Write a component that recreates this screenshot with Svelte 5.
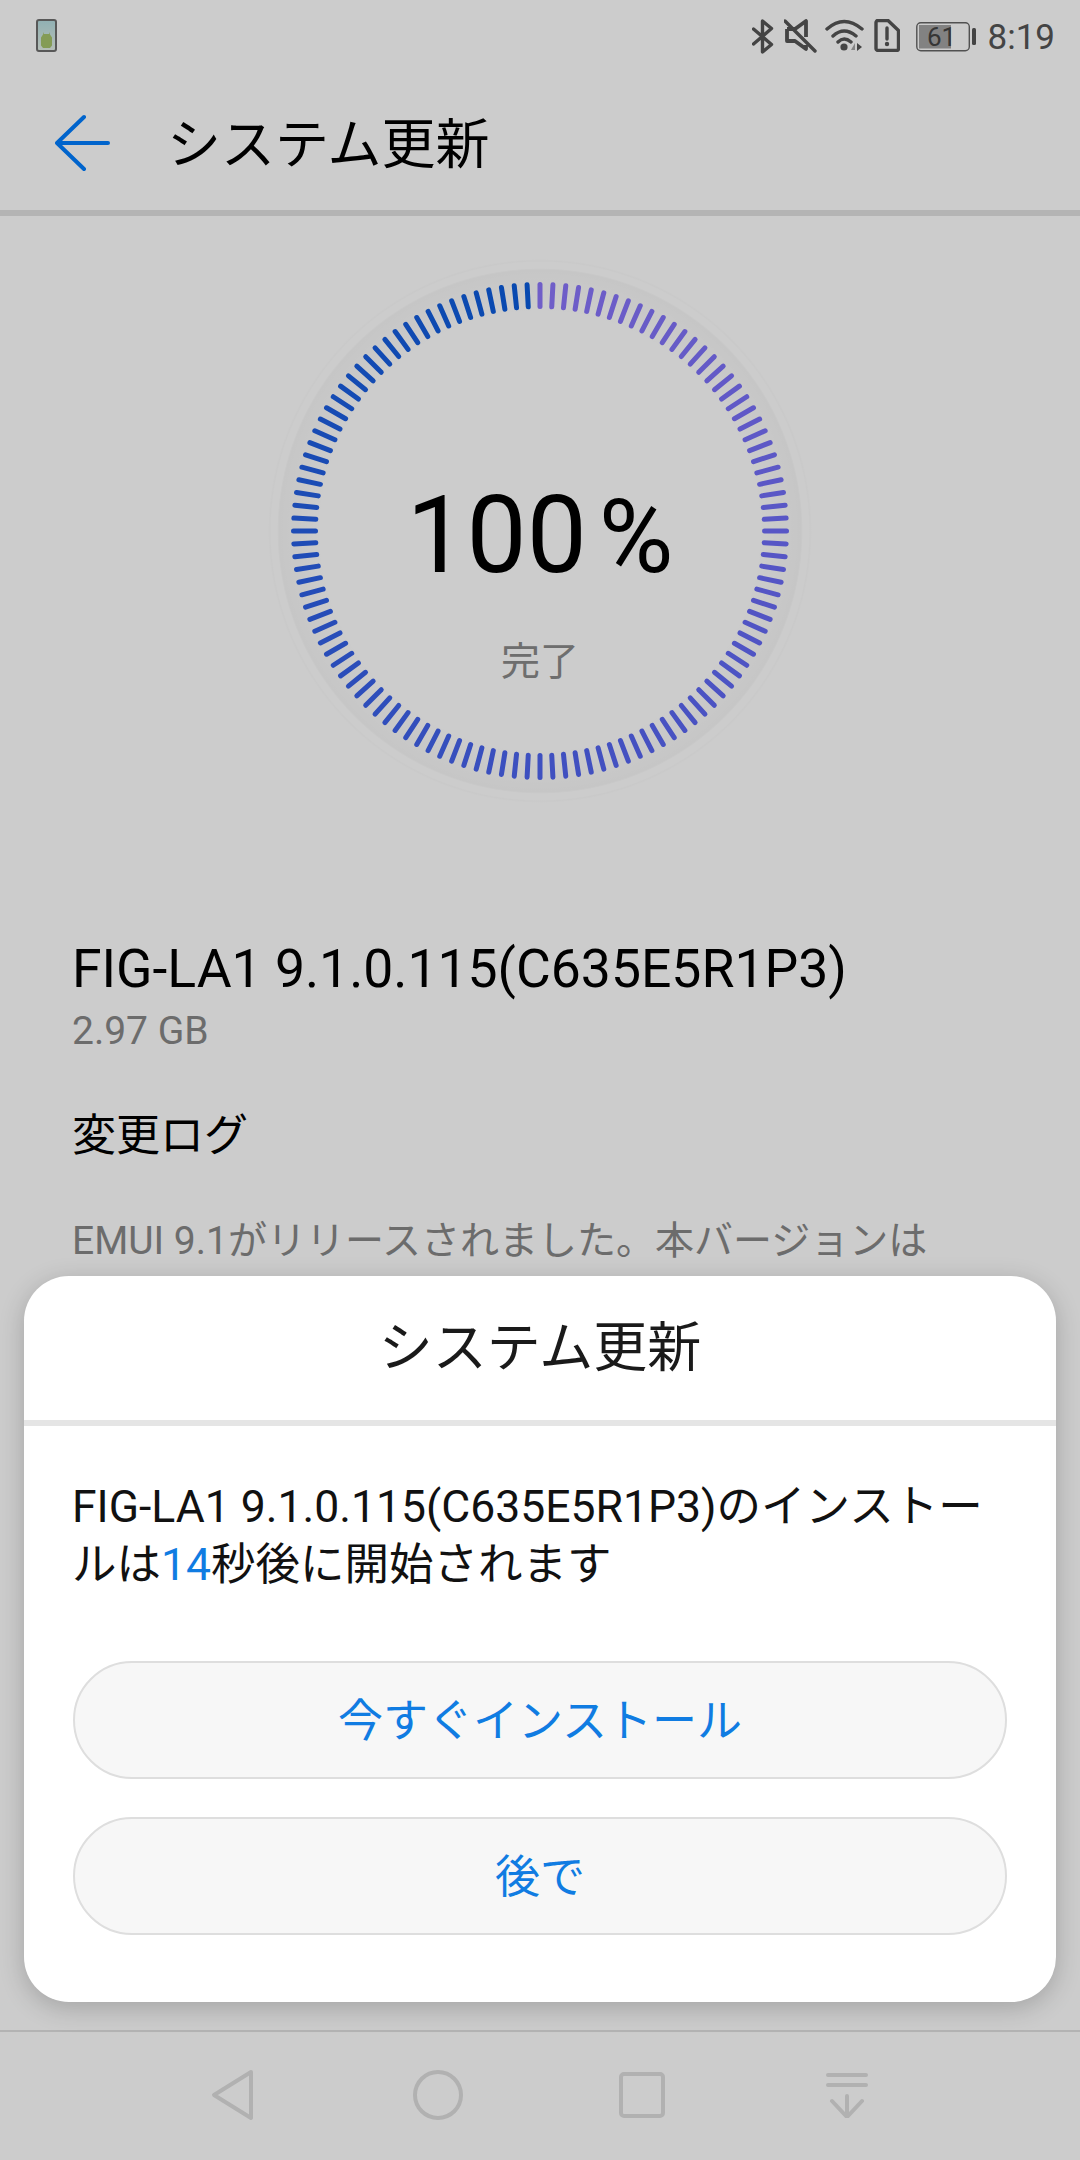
<script>
    // colour stops of the sweep, from 12 o'clock clockwise (before the scrim dims them)
    const stops = [
        [0, [140, 118, 250]],
        [0.25, [110, 108, 248]],
        [0.5, [78, 100, 240]],
        [0.75, [38, 95, 228]],
        [0.99, [10, 92, 220]],
    ]

    function sweepColor(t) {
        let i = 0
        while (i < stops.length - 2 && t > stops[i + 1][0]) i++
        const [t0, c0] = stops[i]
        const [t1, c1] = stops[i + 1]
        const k = Math.min(1, (t - t0) / (t1 - t0))
        const c = c0.map((v, n) => Math.round(v + (c1[n] - v) * k))
        return `rgb(${c[0]},${c[1]},${c[2]})`
    }

    const ticks = Array.from({length: 120}, (_, i) => ({
        angle: i * 3,
        color: sweepColor(i / 120),
    }))
</script>

<div class="screen">
    <div class="status-bar">
        <svg class="notif" width="21" height="33" viewBox="0 0 21 33">
            <defs>
                <linearGradient id="thumb" x1="0" y1="0" x2="0" y2="1">
                    <stop offset="0" stop-color="#b5dde0" />
                    <stop offset="1" stop-color="#e4efe6" />
                </linearGradient>
            </defs>
            <rect x="1" y="1" width="19" height="31" rx="2" fill="url(#thumb)" stroke="#6e6e6e" stroke-width="2" />
            <path d="M8 13v2h5v-2l1 2.500 2 3v8l-2 2.500H7l-2-2.500v-8l2-3z" fill="#a6c46c" />
        </svg>
        <div class="status-right">
            <svg width="22" height="35" viewBox="0 0 22 35" class="ic bt">
                <path d="M1.500 10 L19.500 25.500 L10.500 33 V2 L19.500 9.500 L1.500 25" fill="none" stroke="#555" stroke-width="3.400" stroke-linejoin="round" stroke-linecap="round" />
            </svg>
            <svg width="33" height="34" viewBox="0 0 33 34" class="ic mute">
                <path d="M3 10h8l11-8v16M3 10v12h8l11 8v-4" fill="none" stroke="#555" stroke-width="3.800" stroke-linejoin="round" />
                <path d="M1 2 L31 32" stroke="#555" stroke-width="3.400" stroke-linecap="round" />
            </svg>
            <svg width="40" height="34" viewBox="0 0 40 34" class="ic wifi">
                <path d="M2 10 Q19 -5 37 10 M8 17 Q19 7 31 17 M13 23 Q19 17 26 23" fill="none" stroke="#555" stroke-width="3.400" stroke-linecap="round" />
                <circle cx="19" cy="28" r="3.600" fill="#555" />
                <path d="M26 31 l4-7 v7z" fill="#a5a5a5" />
                <path d="M32 24 l5 4 -5 4z" fill="#555" />
            </svg>
            <svg width="26" height="33" viewBox="0 0 26 33" class="ic sim">
                <path d="M4 1.500h10l10.500 10v18a2 2 0 0 1-2 2H4a2 2 0 0 1-2-2V3.500a2 2 0 0 1 2-2z" fill="none" stroke="#555" stroke-width="3.400" stroke-linejoin="round" />
                <path d="M13 9v11" stroke="#555" stroke-width="3.400" stroke-linecap="round" />
                <circle cx="13" cy="25" r="2.200" fill="#555" />
            </svg>
            <svg width="60" height="30" viewBox="0 0 60 30" class="ic battery">
                <rect x="0.800" y="0.800" width="52.500" height="28" rx="4" fill="none" stroke="#666" stroke-width="1.400" />
                <rect x="3" y="3" width="32" height="23.500" fill="#a3a3a3" />
                <text x="25.500" y="24" text-anchor="middle">61</text>
                <rect x="56" y="6" width="4" height="17" rx="1.500" fill="#555" />
            </svg>
            <span class="clock">8:19</span>
        </div>
    </div>

    <header class="app-bar">
        <svg width="58" height="58" viewBox="0 0 58 58" class="back">
            <path d="M29 3 L2 29 L29 55 M2 29 H53" fill="none" stroke="#007dff" stroke-width="4" stroke-linecap="round" stroke-linejoin="round" />
        </svg>
        <h1>システム更新</h1>
    </header>

    <main>
        <div class="gauge">
            <svg width="580" height="580" viewBox="-290 -290 580 580">
                <defs>
                    <radialGradient id="halo" gradientUnits="userSpaceOnUse" cx="0" cy="0" r="272">
                        <stop offset="0.8" stop-color="#000" stop-opacity="0" />
                        <stop offset="0.96" stop-color="#000" stop-opacity="0.028" />
                        <stop offset="0.966" stop-color="#000" stop-opacity="0" />
                        <stop offset="0.988" stop-color="#000" stop-opacity="0" />
                        <stop offset="0.993" stop-color="#000" stop-opacity="0.012" />
                        <stop offset="1" stop-color="#000" stop-opacity="0" />
                    </radialGradient>
                </defs>
                <circle r="272" fill="url(#halo)" />
                {#each ticks as t}
                    <line y1="-246.500" y2="-224.500" stroke={t.color} stroke-width="5" stroke-linecap="round" transform="rotate({t.angle})" />
                {/each}
            </svg>
            <div class="gauge-text">
                <div class="percent">100<span class="pct">%</span></div>
                <div class="done">完了</div>
            </div>
        </div>

        <section class="info">
            <div class="version">FIG-LA1 9.1.0.115(C635E5R1P3)</div>
            <div class="size">2.97 GB</div>
            <div class="log-title">変更ログ</div>
            <p class="log">EMUI 9.1がリリースされました。本バージョンは</p>
        </section>
    </main>

    <nav class="nav-bar">
        <svg width="44" height="52" viewBox="0 0 44 52">
            <path d="M40 3 L3 26 L40 49 Z" fill="none" stroke="#dedede" stroke-width="4" stroke-linejoin="round" />
        </svg>
        <svg width="50" height="50" viewBox="0 0 50 50">
            <circle cx="25" cy="25" r="23" fill="none" stroke="#dedede" stroke-width="4" />
        </svg>
        <svg width="46" height="46" viewBox="0 0 46 46">
            <rect x="2" y="2" width="42" height="42" rx="3" fill="none" stroke="#dedede" stroke-width="4" />
        </svg>
        <svg width="42" height="46" viewBox="0 0 42 46">
            <path d="M2 3h38M2 13h38M21 24v20M6 29l15 16 15-16" fill="none" stroke="#dedede" stroke-width="4" stroke-linecap="round" stroke-linejoin="round" />
        </svg>
    </nav>

    <div class="scrim"></div>

    <div class="dialog">
        <div class="dialog-title">システム更新</div>
        <div class="dialog-body">
            <p>FIG-LA1 9.1.0.115(C635E5R1P3)のインストールは<span class="count">14</span>秒後に開始されます</p>
            <button>今すぐインストール</button>
            <button>後で</button>
        </div>
    </div>
</div>

<style>
    :global(body) {
        margin: 0;
        background: #fff;
    }
    .screen {
        position: relative;
        width: 1080px;
        height: 2160px;
        display: flex;
        flex-direction: column;
        overflow: hidden;
        background: #fff;
        font-family: Roboto, "Noto Sans CJK JP", sans-serif;
        color: #000;
    }
    .status-bar {
        height: 72px;
        flex: none;
        display: flex;
        align-items: flex-start;
        justify-content: space-between;
        padding: 19px 25px 0 36px;
        box-sizing: border-box;
    }
    .status-right {
        display: flex;
        align-items: flex-start;
    }
    .ic {
        display: block;
    }
    .bt {
        margin-right: 10px;
    }
    .mute {
        margin-right: 8px;
    }
    .wifi {
        margin-right: 9px;
    }
    .sim {
        margin-right: 16px;
    }
    .battery {
        margin: 3px 12px 0 0;
    }
    .battery text {
        font: 26px Roboto, sans-serif;
        fill: #444;
    }
    .clock {
        font-size: 35px;
        line-height: 38px;
        color: #555;
    }
    .app-bar {
        height: 138px;
        flex: none;
        display: flex;
        align-items: center;
        border-bottom: 6px solid #e1e1e1;
        padding-left: 55px;
    }
    .back {
        display: block;
        margin: 4px 54px 0 0;
    }
    h1 {
        margin: 10px 0 0;
        font-size: 54px;
        font-weight: 400;
        line-height: 70px;
    }
    main {
        flex: 1;
        min-height: 0;
    }
    .gauge {
        position: relative;
        height: 580px;
        margin-top: 25px;
        display: flex;
        justify-content: center;
    }
    .gauge svg {
        display: block;
    }
    .gauge-text {
        position: absolute;
        left: 0;
        right: 0;
        top: 235px;
        text-align: center;
    }
    .percent {
        font-size: 107px;
        line-height: 120px;
        font-weight: 400;
    }
    .pct {
        font-size: 102px;
        margin-left: 12px;
    }
    .done {
        margin-top: 40px;
        font-size: 39px;
        line-height: 50px;
        color: #8a8a8a;
    }
    .info {
        padding: 0 72px;
    }
    .version {
        margin-top: 118px;
        font-size: 53.500px;
        line-height: 60px;
    }
    .size {
        margin-top: 10px;
        font-size: 39px;
        line-height: 44px;
        color: #878787;
    }
    .log-title {
        margin-top: 55px;
        font-size: 44px;
        line-height: 56px;
    }
    .log {
        margin: 52px 0 0;
        font-size: 39px;
        line-height: 50px;
        color: #878787;
        white-space: nowrap;
    }
    .nav-bar {
        height: 125px;
        flex: none;
        border-top: 2px solid #e0e0e0;
        display: grid;
        grid-template-columns: repeat(4, 204.500px);
        justify-content: center;
        justify-items: center;
        align-items: center;
        padding-bottom: 3px;
        box-sizing: content-box;
    }
    .nav-bar svg {
        display: block;
    }
    .scrim {
        position: absolute;
        inset: 0;
        background: rgba(0, 0, 0, 0.2);
    }
    .dialog {
        position: absolute;
        left: 24px;
        right: 24px;
        bottom: 158px;
        background: #fff;
        border-radius: 45px;
        box-shadow: 0 6px 26px rgba(0, 0, 0, 0.2);
    }
    .dialog-title {
        height: 135px;
        padding-bottom: 9px;
        display: flex;
        align-items: center;
        justify-content: center;
        font-size: 54px;
        color: #1a1a1a;
        border-bottom: 6px solid #e5e5e5;
    }
    .dialog-body {
        padding: 52px 49px 67px;
    }
    .dialog-body p {
        margin: 0 0 67px -1px;
        font-size: 44.500px;
        line-height: 58px;
        color: #111;
    }
    .count {
        color: #107ce2;
    }
    button {
        display: block;
        width: 100%;
        height: 118px;
        padding: 0 0 6px;
        background: #f7f7f7;
        border: 2px solid #dedede;
        border-radius: 59px;
        font-family: inherit;
        font-size: 45px;
        color: #107ce2;
    }
    button + button {
        margin-top: 38px;
    }
</style>
